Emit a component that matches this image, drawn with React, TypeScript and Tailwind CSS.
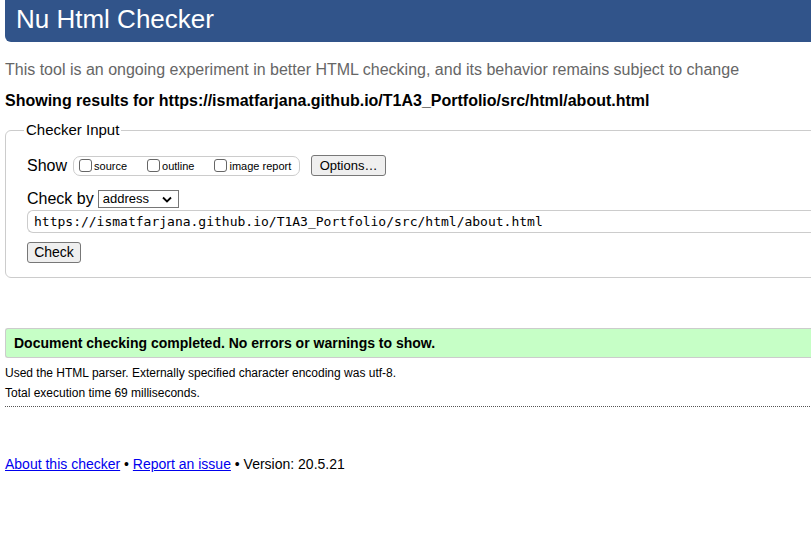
export default function App() {
  return (
    <div className="w-[811px] h-[552px] overflow-hidden bg-white font-['Liberation_Sans',Arial,sans-serif] text-black">
      <div className="w-[860px]">
        {/* Header */}
        <h1 className="ml-[5px] h-[42px] rounded-bl-md bg-[#31548a] pl-[11px] pt-[3px] text-[26px] leading-[32px] text-white">
          Nu Html Checker
        </h1>

        <p className="mt-[18px] ml-[5px] text-[16px] leading-[20px] text-[#666]">
          This tool is an ongoing experiment in better HTML checking, and its behavior remains subject to change
        </p>
        <p className="mt-[11px] ml-[5px] text-[16px] leading-[20px] font-bold">
          Showing results for https://ismatfarjana.github.io/T1A3_Portfolio/src/html/about.html
        </p>

        {/* Checker input */}
        <fieldset className="mt-[10px] ml-[5px] rounded-md border border-[#ccc] pl-[21px] pb-[14px]">
          <legend className="-ml-[3px] px-[2px] text-[15px] leading-[18px]">Checker Input</legend>

          <div className="mt-[16px] flex items-center">
            <span className="text-[16px] leading-[20px]">Show</span>
            <div className="ml-[6px] flex h-[20px] w-[227px] items-center rounded-[7px] border border-[#ccc] pl-[5px] text-[11px]">
              <label className="flex items-center">
                <span className="h-[13px] w-[13px] rounded-[3px] border border-[#666] bg-white" />
                <span className="ml-[2px] mt-[2px]">source</span>
              </label>
              <label className="ml-[20px] flex items-center">
                <span className="h-[13px] w-[13px] rounded-[3px] border border-[#666] bg-white" />
                <span className="ml-[2px] mt-[2px]">outline</span>
              </label>
              <label className="ml-[20px] flex items-center">
                <span className="h-[13px] w-[13px] rounded-[3px] border border-[#666] bg-white" />
                <span className="ml-[2px] mt-[2px]">image report</span>
              </label>
            </div>
            <button className="ml-[11px] h-[21px] w-[75px] rounded-[3px] border border-[#777] bg-[#efefef] text-[13px] leading-[19px]">
              Options…
            </button>
          </div>

          <div className="mt-[13px] flex items-center">
            <span className="text-[16px] leading-[20px]">Check by</span>
            <div className="ml-[4px] flex h-[18px] w-[81px] items-center justify-between border border-[#767676] bg-white pl-[4px] pr-[4px] text-[13px]">
              <span>address</span>
              <svg width="10" height="7" viewBox="0 0 10 7" className="mr-[2px]">
                <path d="M1 1.5 L5 5.5 L9 1.5" fill="none" stroke="#000" strokeWidth="1.8" />
              </svg>
            </div>
          </div>

          <div className="mt-[1px] flex h-[23px] items-center rounded-l-md border border-r-0 border-[#ccc] pl-[6px] font-['DejaVu_Sans_Mono',monospace] text-[13px]">
            https://ismatfarjana.github.io/T1A3_Portfolio/src/html/about.html
          </div>

          <button className="mt-[9px] block h-[21px] w-[54px] rounded-[3px] border border-[#777] bg-[#efefef] text-[14px] leading-[19px]">
            Check
          </button>
        </fieldset>

        {/* Result */}
        <div className="mt-[50px] ml-[5px] flex h-[30px] items-center rounded-l-[3px] border border-r-0 border-[#ccc] bg-[#c6ffc6] pl-[8px] text-[14px] font-bold">
          Document checking completed. No errors or warnings to show.
        </div>
        <p className="mt-[7px] ml-[5px] text-[12px] leading-[16px]">
          Used the HTML parser. Externally specified character encoding was utf-8.
        </p>
        <p className="mt-[4px] ml-[5px] text-[12px] leading-[16px]">Total execution time 69 milliseconds.</p>
        <div className="mt-[5px] ml-[5px] border-b border-dotted border-[#555]" />

        {/* Footer */}
        <p className="mt-[48px] ml-[5px] text-[14px] leading-[18px]">
          <a href="#" className="text-[#00e] underline">About this checker</a>
          {" • "}
          <a href="#" className="text-[#00e] underline">Report an issue</a>
          {" • Version: 20.5.21"}
        </p>
      </div>
    </div>
  );
}
